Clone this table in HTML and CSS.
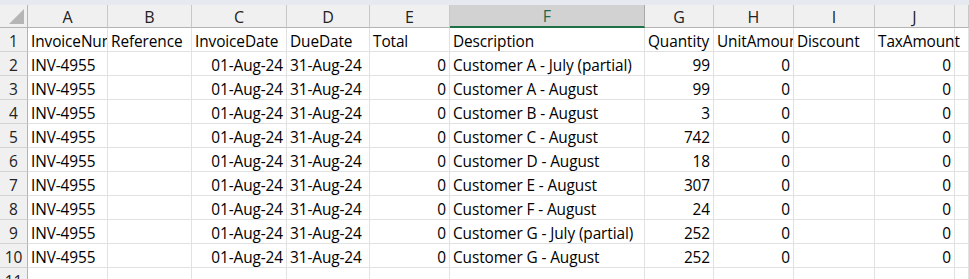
FILE: index.html
```html
<!DOCTYPE html>
<html>
<head>
<meta charset="utf-8">
<link rel="stylesheet" href="styles.css">
</head>
<body>
<div class="topstrip"></div>
<div class="sheet">
  <div class="ch corner"><span class="tri"></span></div>
  <div class="ch">A</div><div class="ch">B</div><div class="ch">C</div><div class="ch">D</div><div class="ch">E</div><div class="ch sel">F</div><div class="ch">G</div><div class="ch">H</div><div class="ch">I</div><div class="ch">J</div><div class="ch"></div>

  <div class="rh">1</div><div class="c">InvoiceNumber</div><div class="c">Reference</div><div class="c">InvoiceDate</div><div class="c">DueDate</div><div class="c">Total</div><div class="c">Description</div><div class="c">Quantity</div><div class="c">UnitAmount</div><div class="c">Discount</div><div class="c spill">TaxAmount</div><div class="c"></div>

  <div class="rh">2</div><div class="c">INV-4955</div><div class="c"></div><div class="c n">01-Aug-24</div><div class="c">31-Aug-24</div><div class="c n">0</div><div class="c">Customer A - July (partial)</div><div class="c n">99</div><div class="c n">0</div><div class="c"></div><div class="c n">0</div><div class="c"></div>

  <div class="rh">3</div><div class="c">INV-4955</div><div class="c"></div><div class="c n">01-Aug-24</div><div class="c">31-Aug-24</div><div class="c n">0</div><div class="c">Customer A - August</div><div class="c n">99</div><div class="c n">0</div><div class="c"></div><div class="c n">0</div><div class="c"></div>

  <div class="rh">4</div><div class="c">INV-4955</div><div class="c"></div><div class="c n">01-Aug-24</div><div class="c">31-Aug-24</div><div class="c n">0</div><div class="c">Customer B - August</div><div class="c n">3</div><div class="c n">0</div><div class="c"></div><div class="c n">0</div><div class="c"></div>

  <div class="rh">5</div><div class="c">INV-4955</div><div class="c"></div><div class="c n">01-Aug-24</div><div class="c">31-Aug-24</div><div class="c n">0</div><div class="c">Customer C - August</div><div class="c n">742</div><div class="c n">0</div><div class="c"></div><div class="c n">0</div><div class="c"></div>

  <div class="rh">6</div><div class="c">INV-4955</div><div class="c"></div><div class="c n">01-Aug-24</div><div class="c">31-Aug-24</div><div class="c n">0</div><div class="c">Customer D - August</div><div class="c n">18</div><div class="c n">0</div><div class="c"></div><div class="c n">0</div><div class="c"></div>

  <div class="rh">7</div><div class="c">INV-4955</div><div class="c"></div><div class="c n">01-Aug-24</div><div class="c">31-Aug-24</div><div class="c n">0</div><div class="c">Customer E - August</div><div class="c n">307</div><div class="c n">0</div><div class="c"></div><div class="c n">0</div><div class="c"></div>

  <div class="rh">8</div><div class="c">INV-4955</div><div class="c"></div><div class="c n">01-Aug-24</div><div class="c">31-Aug-24</div><div class="c n">0</div><div class="c">Customer F - August</div><div class="c n">24</div><div class="c n">0</div><div class="c"></div><div class="c n">0</div><div class="c"></div>

  <div class="rh">9</div><div class="c">INV-4955</div><div class="c"></div><div class="c n">01-Aug-24</div><div class="c">31-Aug-24</div><div class="c n">0</div><div class="c">Customer G - July (partial)</div><div class="c n">252</div><div class="c n">0</div><div class="c"></div><div class="c n">0</div><div class="c"></div>

  <div class="rh">10</div><div class="c">INV-4955</div><div class="c"></div><div class="c n">01-Aug-24</div><div class="c">31-Aug-24</div><div class="c n">0</div><div class="c">Customer G - August</div><div class="c n">252</div><div class="c n">0</div><div class="c"></div><div class="c n">0</div><div class="c"></div>

  <div class="rh">11</div><div class="c"></div><div class="c"></div><div class="c"></div><div class="c"></div><div class="c"></div><div class="c"></div><div class="c"></div><div class="c"></div><div class="c"></div><div class="c"></div><div class="c"></div>
</div>
</body>
</html>
```

FILE: styles.css
```css
* { box-sizing: border-box; }
html, body {
  margin: 0;
  padding: 0;
  background: #ffffff;
  overflow: hidden;
  font-family: "Open Sans", "Noto Sans", sans-serif;
  color: #000;
}
.topstrip {
  height: 5px;
  background: #e6e9f0;
}
.sheet {
  display: grid;
  grid-template-columns: 28px 80px 84px 95px 83px 80px 195px 69px 80px 81px 80px 14px;
  grid-template-rows: 23px repeat(11, 24px);
}
.ch {
  background: #f0f0f0;
  border-right: 1px solid #c8c8c8;
  border-bottom: 1px solid #b4b4b4;
  font-size: 16px;
  color: #222;
  display: flex;
  align-items: center;
  justify-content: center;
  line-height: 1;
  padding-top: 1px;
}
.ch.sel {
  background: #d2d2d2;
  color: #1f6a4a;
  border-bottom: 2px solid #1e7145;
  border-right-color: #a9a9a9;
}
.corner {
  position: relative;
  border-right: 1px solid #b4b4b4;
}
.tri {
  position: absolute;
  right: 3px;
  bottom: 3px;
  width: 0;
  height: 0;
  border-left: 15px solid transparent;
  border-bottom: 15px solid #b5b5b5;
}
.rh {
  background: #f0f0f0;
  border-right: 1px solid #b4b4b4;
  border-bottom: 1px solid #d4d4d4;
  font-size: 15.5px;
  color: #222;
  display: flex;
  align-items: flex-end;
  justify-content: center;
  padding-bottom: 2px;
  line-height: 1;
}
.c {
  border-right: 1px solid #e1e1e1;
  border-bottom: 1px solid #e1e1e1;
  font-size: 15.4px;
  white-space: nowrap;
  overflow: hidden;
  padding: 0 3px 2px 3px;
  display: flex;
  align-items: flex-end;
  line-height: 1;
  letter-spacing: -0.1px;
}
.c.n {
  justify-content: flex-end;
}
.c.spill {
  overflow: visible;
  position: relative;
  z-index: 1;
}
```
